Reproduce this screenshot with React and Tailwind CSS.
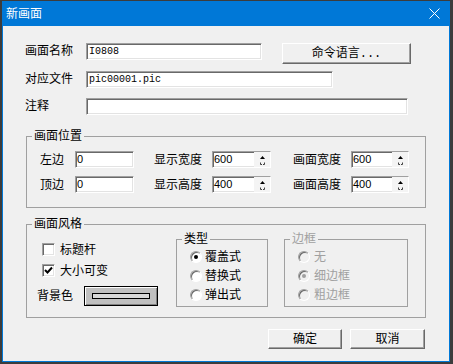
const sunken =
  "bg-white border border-t-[#a0a0a0] border-l-[#a0a0a0] border-r-white border-b-white shadow-[inset_1px_1px_0_#696969,inset_-1px_-1px_0_#e3e3e3]";

function Field({ w, children }) {
  return (
    <div className={`${w} h-[17px] ${sunken} flex items-center pl-[2px] font-['Liberation_Mono',monospace] text-[10px] leading-none`}>
      {children}
    </div>
  );
}

function Spin({ w, value }) {
  return (
    <div className={`${w} h-[17px] ${sunken} flex`}>
      <div className="flex-1 flex items-center pl-px text-[11px] leading-none">{value}</div>
      <div className="w-[16px] h-full bg-[#f4f4f4] flex items-center justify-center">
        <svg width="15" height="15" viewBox="0 0 15 15">
          <path d="M5 7h5l-2.5-3z" fill="#000" />
          <path d="M5.5 10.5v2h1.5M9.5 10.5v2H8" stroke="#404040" fill="none" strokeWidth="1" />
        </svg>
      </div>
    </div>
  );
}

function Check({ checked }) {
  return (
    <div className={`w-[13px] h-[13px] ${sunken} flex items-center justify-center`}>
      {checked && (
        <svg width="9" height="9" viewBox="0 0 9 9">
          <path d="M1 4l2.5 2.5L8 1.5" stroke="#000" strokeWidth="2" fill="none" />
        </svg>
      )}
    </div>
  );
}

function Radio({ checked, disabled }) {
  return (
    <div
      className={`w-[12px] h-[12px] rounded-full border border-t-[#a0a0a0] border-l-[#a0a0a0] border-r-white border-b-white shadow-[inset_1px_1px_0_#696969] flex items-center justify-center ${
        disabled ? "bg-[#f0f0f0]" : "bg-white"
      }`}
    >
      {checked && <div className={`w-[4px] h-[4px] rounded-full ${disabled ? "bg-[#a0a0a0]" : "bg-black"}`} />}
    </div>
  );
}

function Btn({ w, h, children, mono }) {
  return (
    <div
      className={`${w} ${h} bg-[#f0f0f0] border border-t-white border-l-white border-r-[#696969] border-b-[#696969] shadow-[inset_-1px_-1px_0_#a0a0a0] flex items-center justify-center leading-none ${
        mono ? "font-['Liberation_Mono','Noto_Sans_CJK_SC',monospace]" : ""
      }`}
    >
      {children}
    </div>
  );
}

function Group({ className, label, disabled, children }) {
  return (
    <div className={`relative border border-[#a0a0a0] ${className}`}>
      <span
        className={`absolute left-[5px] -top-[8px] px-[2px] bg-[#f0f0f0] leading-[14px] ${
          disabled ? "text-[#a0a0a0]" : "text-black"
        }`}
      >
        {label}
      </span>
      {children}
    </div>
  );
}

function RadioRow({ label, checked, disabled, gap }) {
  return (
    <div className="h-[19px] flex items-center">
      <Radio checked={checked} disabled={disabled} />
      <span className={`${gap} leading-none ${disabled ? "text-[#a0a0a0]" : "text-black"}`}>{label}</span>
    </div>
  );
}

export default function App() {
  return (
    <div className="w-[453px] h-[364px] bg-[#3c3c3c] pt-px pl-[2px] pr-[3px] pb-[2px] flex font-['Liberation_Sans','Noto_Sans_CJK_SC',sans-serif] text-[12px] text-black">
      <div className="flex-1 flex flex-col bg-[#0078d7] px-px pb-px">
        <div className="h-[25px] flex items-center justify-between pl-[3px] pr-[9px] text-white">
          <span className="leading-none">新画面</span>
          <svg width="11" height="11" viewBox="0 0 11 11">
            <path d="M0.5 0.5l10 10M10.5 0.5l-10 10" stroke="#fff" strokeWidth="1" />
          </svg>
        </div>

        <div className="flex-1 bg-[#f0f0f0] pt-[17px] pl-[22px] pr-[23px]">
          <div className="flex items-start">
            <span className="w-[61px] h-[17px] leading-[17px]">画面名称</span>
            <Field w="w-[176px]">I0808</Field>
            <div className="ml-[20px]">
              <Btn w="w-[129px]" h="h-[21px]" mono>
                命令语言...
              </Btn>
            </div>
          </div>
          <div className="flex items-start mt-[7px]">
            <span className="w-[61px] h-[17px] leading-[17px]">对应文件</span>
            <Field w="w-[247px]">pic00001.pic</Field>
          </div>
          <div className="flex items-start mt-[10px]">
            <span className="w-[61px] h-[17px] leading-[17px]">注释</span>
            <Field w="w-[322px]" />
          </div>

          <Group label="画面位置" className="mt-[21px] ml-px w-[400px] h-[72px] pt-[14px] pl-[13px]">
            <div className="flex items-center h-[17px]">
              <span className="w-[35px]">左边</span>
              <Field w="w-[59px]">
                <span className="font-['Liberation_Sans',sans-serif] text-[11px] -ml-px">0</span>
              </Field>
              <span className="ml-[20px] w-[58px]">显示宽度</span>
              <Spin w="w-[59px]" value="600" />
              <span className="ml-[22px] w-[58px]">画面宽度</span>
              <Spin w="w-[58px]" value="600" />
            </div>
            <div className="flex items-center h-[17px] mt-[8px]">
              <span className="w-[35px]">顶边</span>
              <Field w="w-[59px]">
                <span className="font-['Liberation_Sans',sans-serif] text-[11px] -ml-px">0</span>
              </Field>
              <span className="ml-[20px] w-[58px]">显示高度</span>
              <Spin w="w-[59px]" value="400" />
              <span className="ml-[22px] w-[58px]">画面高度</span>
              <Spin w="w-[58px]" value="400" />
            </div>
          </Group>

          <Group label="画面风格" className="mt-[16px] ml-px w-[400px] h-[94px] pt-[14px] pl-[10px] flex items-start">
            <div className="w-[139px] flex flex-col">
              <div className="mt-[4px] ml-[5px] flex items-center">
                <Check />
                <span className="ml-[5px] leading-none">标题杆</span>
              </div>
              <div className="mt-[8px] ml-[5px] flex items-center">
                <Check checked />
                <span className="ml-[5px] leading-none">大小可变</span>
              </div>
              <div className="mt-[9px] flex items-center">
                <span className="w-[47px] leading-none">背景色</span>
                <div className="w-[74px] h-[20px] border border-black bg-[#c0c0c0] shadow-[inset_1px_1px_0_#fff,inset_-1px_-1px_0_#808080] flex items-center justify-center">
                  <div className="w-[58px] h-[6px] border border-black bg-[#d8d8d8]" />
                </div>
              </div>
            </div>

            <Group label="类型" className="w-[92px] h-[68px] pt-[7px] pl-[13px]">
              <RadioRow label="覆盖式" checked gap="ml-[3px]" />
              <RadioRow label="替换式" gap="ml-[3px]" />
              <RadioRow label="弹出式" gap="ml-[3px]" />
            </Group>

            <Group label="边框" disabled className="ml-[16px] w-[124px] h-[68px] pt-[7px] pl-[13px]">
              <RadioRow label="无" disabled gap="ml-[4px]" />
              <RadioRow label="细边框" checked disabled gap="ml-[4px]" />
              <RadioRow label="粗边框" disabled gap="ml-[4px]" />
            </Group>
          </Group>

          <div className="mt-[11px] flex justify-end pr-px">
            <Btn w="w-[74px]" h="h-[20px]">确定</Btn>
            <div className="ml-[8px]">
              <Btn w="w-[75px]" h="h-[20px]">取消</Btn>
            </div>
          </div>
        </div>
      </div>
    </div>
  );
}
